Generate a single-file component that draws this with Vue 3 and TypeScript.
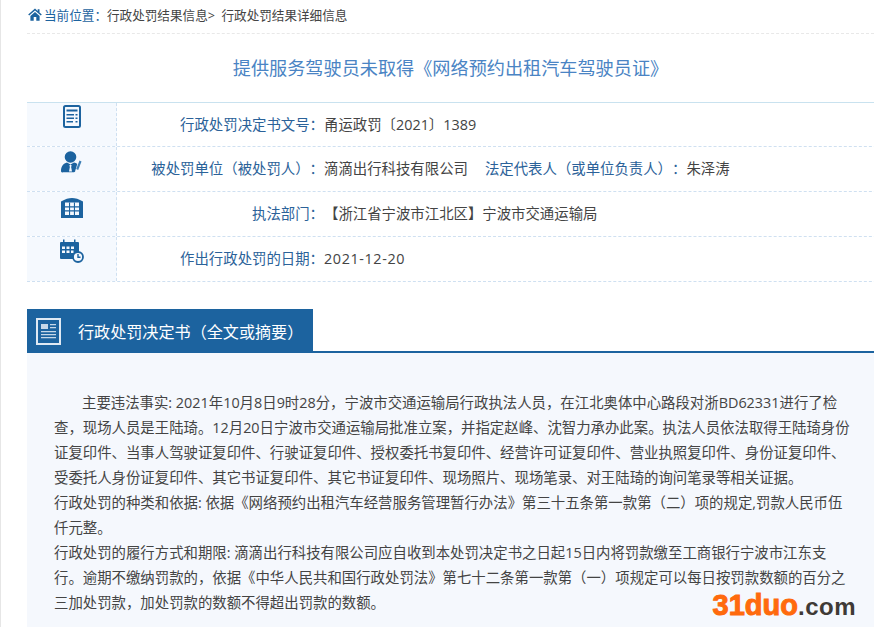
<script setup lang="ts">
interface Row { icon: string; label: string; value: string; label2?: string; value2?: string }
const rows: Row[] = [
  { icon: 'doc', label: '行政处罚决定书文号：', value: '甬运政罚〔2021〕1389' },
  { icon: 'person', label: '被处罚单位（被处罚人）：', value: '滴滴出行科技有限公司', label2: '法定代表人（或单位负责人）：', value2: '朱泽涛' },
  { icon: 'building', label: '执法部门：', value: '【浙江省宁波市江北区】宁波市交通运输局' },
  { icon: 'calendar', label: '作出行政处罚的日期：', value: '2021-12-20' },
]
</script>

<template>
  <div class="page">
    <div class="crumb">
      <svg class="home" width="14" height="13" viewBox="0 0 14 13"><path d="M7 0.500.2 6.600l1 1L7 2.600l5.800 5 1-1-2.300-2V1.200h-1.800v1.900zM2.400 8V12.800h3.300V9h2.600v3.800h3.300V8L7 3.900z" fill="#1c639f"/></svg>
      <span class="here">当前位置：</span><span>行政处罚结果信息&gt;&nbsp;&nbsp;行政处罚结果详细信息</span>
    </div>
    <h1 class="title">提供服务驾驶员未取得《网络预约出租汽车驾驶员证》</h1>
    <div class="table">
      <div v-for="r in rows" :key="r.icon" class="row">
        <div class="cell-icon" :class="'icon-' + r.icon">
          <svg v-if="r.icon === 'doc'" width="18" height="23" viewBox="0 0 18 23"><rect x="1" y="1" width="16" height="21" rx="1.500" fill="#f5f9fe" stroke="#1c639f" stroke-width="2"/><path d="M3.500 4.500h11v2h-11zM3.500 9h7.500v1.500H3.500zM12.500 9h2v1.500h-2zM3.500 12.500h7.500V14H3.500zM12.500 12.500h2V14h-2zM3.500 16h6.500v1.500H3.500zM12.500 16h2v1.500h-2z" fill="#1c639f"/></svg>
          <svg v-else-if="r.icon === 'person'" width="21" height="22" viewBox="0 0 21 22"><circle cx="9.500" cy="6" r="5.800" fill="#1c639f"/><path d="M0 20c0-5 2.500-7.500 6-8.500l3.500 2 3.500-2c1.300.3 2.400.8 3.300 1.500l-2 6.500c0 1.500-1 1.800-2.300 1.800H2C.8 21.800 0 21.200 0 20z" fill="#1c639f"/><path d="M9.500 13.500l1.300 1.300-.7 1 .9 4.700H8l.9-4.700-.7-1z" fill="#f5f9fe"/><path d="M18.500 9.500l2 1-3.300 8.500-2-1z" fill="#3d7fb5"/></svg>
          <svg v-else-if="r.icon === 'building'" width="22" height="20" viewBox="0 0 22 20"><path d="M0 3.500C4 1 8 0 11 0s7 1 11 3.500V20H0z" fill="#1c639f"/><path d="M4 4.500h14V17H4z" fill="#f5f9fe"/><path d="M8 4.500h1.100V17H8zM12.900 4.500H14V17h-1.100zM4 8.300h14v1.100H4zM4 12.300h14v1.100H4z" fill="#1c639f"/></svg>
          <svg v-else width="24" height="24" viewBox="0 0 24 24"><path d="M1 3h17a1 1 0 0 1 1 1v10a6 6 0 0 0-5 6H1a1 1 0 0 1-1-1V4a1 1 0 0 1 1-1z" fill="#1c639f"/><path d="M3 0.500h1.500V4H3zM14 0.500h1.500V4H14z" fill="#1c639f"/><path d="M2 7.500h3v2.500H2zM6.500 7.500h3v2.500h-3zM11 7.500h3v2.500h-3zM2 11.500h3v2.500H2zM6.500 11.500h3v2.500h-3zM11 11.500h2.500v2.500H11z" fill="#f5f9fe"/><circle cx="18" cy="18" r="5" fill="#f5f9fe" stroke="#1c639f" stroke-width="1.800"/><path d="M18 15v3.200h2.500" fill="none" stroke="#1c639f" stroke-width="1.400"/></svg>
        </div>
        <div class="cell-label">{{ r.label }}</div>
        <div class="cell-value" :class="{ date: r.icon === 'calendar' }">{{ r.value }}<span v-if="r.label2" class="label2">{{ r.label2 }}</span>{{ r.value2 }}</div>
      </div>
    </div>
    <div class="section">
      <div class="tab">
        <svg width="25" height="27" viewBox="0 0 25 27"><rect x="1" y="1" width="23" height="25" fill="#1c639f" stroke="#dfe9f3" stroke-width="2"/><path d="M5 6h7v5H5zM14 6h6v1.200h-6zM14 9h6v1.200h-6zM5 13h15v1.300H5zM5 16h15v1.300H5zM5 19h15v1.300H5z" fill="#c6d8e8"/></svg>
        <span>行政处罚决定书（全文或摘要）</span>
      </div>
    </div>
    <div class="body">
      <p class="indent">主要违法事实: 2021年10月8日9时28分，宁波市交通运输局行政执法人员，在江北奥体中心路段对浙BD62331进行了检<br>查，现场人员是王陆琦。12月20日宁波市交通运输局批准立案，并指定赵峰、沈智力承办此案。执法人员依法取得王陆琦身份<br>证复印件、当事人驾驶证复印件、行驶证复印件、授权委托书复印件、经营许可证复印件、营业执照复印件、身份证复印件、<br>受委托人身份证复印件、其它书证复印件、其它书证复印件、现场照片、现场笔录、对王陆琦的询问笔录等相关证据。</p>
      <p>行政处罚的种类和依据: 依据《网络预约出租汽车经营服务管理暂行办法》第三十五条第一款第（二）项的规定,罚款人民币伍<br>仟元整。</p>
      <p>行政处罚的履行方式和期限: 滴滴出行科技有限公司应自收到本处罚决定书之日起15日内将罚款缴至工商银行宁波市江东支<br>行。逾期不缴纳罚款的，依据《中华人民共和国行政处罚法》第七十二条第一款第（一）项规定可以每日按罚款数额的百分之<br>三加处罚款，加处罚款的数额不得超出罚款的数额。</p>
    </div>
    <div class="mark"><b>31duo</b><span>.com</span></div>
  </div>
</template>

<style>
html, body { margin: 0; overflow: hidden; background: #fff; }
</style>

<style scoped>
.page {
  position: relative;
  box-sizing: border-box;
  width: 874px;
  height: 627px;
  overflow: hidden;
  padding-left: 26px;
  border-left: 1px solid #e6e6e6;
  font-family: "Open Sans", "Noto Sans CJK SC", sans-serif;
  font-size: 14.400px;
  color: #444;
  text-spacing-trim: space-all;
}
.crumb {
  display: flex;
  align-items: center;
  height: 34px;
  box-sizing: border-box;
  padding-bottom: 5px;
  font-size: 12.600px;
  color: #444;
  border-bottom: 1px dashed #e8e8e8;
}
.home { margin: 0 2px 0 1px; }
.here { color: #1c639f; }
.title {
  margin: 0;
  height: 68px;
  padding-top: 19px;
  box-sizing: border-box;
  font-size: 18.150px;
  font-weight: 400;
  line-height: 30px;
  text-align: center;
  color: #4a84c4;
}
.table { border-top: 1px solid #c9e2ef; width: 900px; }
.row { display: flex; height: 45px; box-sizing: border-box; border-bottom: 1px dashed #cfe0f1; }
.row:first-child { height: 44px; }
.cell-icon {
  width: 89px;
  background: #f5f9fe;
  border-right: 1px dashed #cfe0f1;
  display: flex;
  justify-content: center;
  align-items: flex-start;
}
.icon-doc { padding-top: 2px; }
.icon-person { padding-top: 4px; }
.icon-building { padding-top: 6px; }
.icon-calendar { padding-top: 2px; }
.cell-label {
  width: 207px;
  box-sizing: border-box;
  text-align: right;
  color: #2b6299;
  line-height: 43px;
}
.cell-value { line-height: 43px; color: #444; }
.date { letter-spacing: 0.600px; }
.label2 { color: #2b6299; margin-left: 17px; }
.section { margin-top: 27px; border-bottom: 2px solid #1c639f; height: 42px; }
.tab {
  width: 286px;
  height: 44px;
  background: #1c639f;
  color: #fff;
  font-size: 16.100px;
  display: flex;
  align-items: center;
  gap: 17px;
  padding-left: 9px;
  box-sizing: border-box;
}
.body {
  background: #f5f8fd;
  padding: 37px 0 40px 27px;
  height: 300px;
  box-sizing: border-box;
  line-height: 25px;
  color: #444;
  white-space: nowrap;
}
.body p { margin: 0; }
.indent { text-indent: 28px; }
.mark {
  position: absolute;
  right: 18px;
  bottom: 7px;
  font-family: "Liberation Sans", sans-serif;
  line-height: 26px;
  display: flex;
  align-items: baseline;
}
.mark b { color: #ff6a0d; font-size: 29px; font-weight: 700; -webkit-text-stroke: 1px #ff6a0d; }
.mark span { color: #3f3a36; font-size: 24px; font-weight: 700; letter-spacing: 0.500px; }
</style>
